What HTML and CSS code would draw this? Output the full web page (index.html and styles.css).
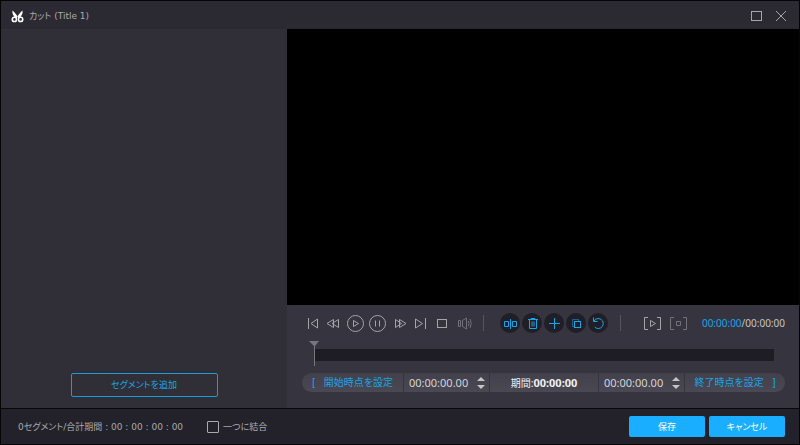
FILE: index.html
```html
<!DOCTYPE html>
<html lang="ja">
<head>
  <meta charset="UTF-8">
  <meta name="viewport" content="width=device-width, initial-scale=1.0">
  <title>カット (Title 1)</title>
  <link rel="stylesheet" href="styles.css">
</head>
<body>
  <header class="titlebar">
    <svg class="logo" width="13" height="13" viewBox="0 0 13 13">
      <path d="M1.5 0.5C0.9 3.5 2.4 6 5.2 8.6L7.2 7.6C5.6 4.6 3.8 2.4 1.5 0.5ZM11.5 0.5C12.1 3.5 10.6 6 7.8 8.6L5.8 7.6C7.4 4.6 9.2 2.4 11.5 0.5Z" fill="#fff"/>
      <circle cx="3.4" cy="9.4" r="2.1" fill="none" stroke="#fff" stroke-width="1.6"/>
      <circle cx="9.6" cy="9.4" r="2.1" fill="none" stroke="#fff" stroke-width="1.6"/>
    </svg>
    <h1>カット (Title 1)</h1>
    <div class="window-buttons">
      <button type="button" aria-label="最大化"><svg width="12" height="12"><rect x="1.5" y="1.5" width="10" height="9"/></svg></button>
      <button type="button" aria-label="閉じる"><svg width="12" height="12"><path d="M1 1L11 11M11 1L1 11"/></svg></button>
    </div>
  </header>

  <main>
    <section class="segments">
      <button type="button" class="add-segment">セグメントを追加</button>
    </section>

    <section class="player">
      <div class="video"></div>

      <!-- Playback and segment tools -->
      <div class="controls">
        <div class="playback">
          <button type="button" aria-label="先頭へ"><svg width="22" height="22"><path d="M8.5 6V17M17.5 7V16L11 11.5Z"/></svg></button>
          <button type="button" aria-label="巻き戻し"><svg width="22" height="22"><path d="M11.5 7.5V15.5L5 11.5ZM16.5 7.5V15.5L10 11.5Z"/></svg></button>
          <button type="button" aria-label="再生"><svg width="22" height="22"><circle cx="11.5" cy="11.5" r="8"/><path d="M9.5 8.5V14.5L14.5 11.5Z"/></svg></button>
          <button type="button" aria-label="一時停止"><svg width="22" height="22"><circle cx="11.5" cy="11.5" r="8"/><path d="M9.5 8.5V14.5M13.5 8.5V14.5"/></svg></button>
          <button type="button" aria-label="早送り"><svg width="22" height="22"><path d="M7.5 7.5V15.5L13.5 11.5ZM11.5 7.5V15.5L18 11.5Z"/></svg></button>
          <button type="button" aria-label="末尾へ"><svg width="22" height="22"><path d="M15.5 6V17M5.5 7V16L12.5 11.5Z"/></svg></button>
          <button type="button" aria-label="停止"><svg width="22" height="22"><rect x="5.5" y="7.5" width="9" height="8"/></svg></button>
          <button type="button" class="dim" aria-label="音量"><svg width="22" height="22"><path d="M4.5 8.5H6.5V14.5H4.5ZM8.5 8.5L12.5 6V17L8.5 14.5ZM14.5 9Q15.5 11.5 14.5 14M16 7Q18.5 11.5 16 16"/></svg></button>
        </div>
        <span class="divider"></span>
        <div class="tools">
          <button type="button" aria-label="分割"><svg width="20" height="20"><path d="M10.5 6V16M4.5 8.5H8.5V13.5H4.5ZM12.5 8.5H16.5V13.5H12.5Z"/></svg></button>
          <button type="button" aria-label="削除"><svg width="20" height="20"><path d="M6 6.5H16M9 6.5V5.5H13V6.5M7.5 6.5V15.5H14.5V6.5M10 8.5V13.5M12 8.5V13.5"/></svg></button>
          <button type="button" aria-label="追加"><svg width="20" height="20"><path d="M10.5 5V16M5 10.5H16"/></svg></button>
          <button type="button" aria-label="コピー"><svg width="20" height="20"><path class="back" d="M8 13.5H6.5V6.5H12.5V8"/><rect x="8.5" y="8.5" width="6" height="6"/></svg></button>
          <button type="button" aria-label="リセット"><svg width="20" height="20"><path d="M5.5 4.5V8.5H9.5M5.8 8.2A5 5 0 1 1 6.8 14.2"/></svg></button>
        </div>
        <span class="divider"></span>
        <div class="preview">
          <button type="button" aria-label="区間を再生"><svg width="22" height="22"><path d="M6 5.5H2.5V17.5H6M15 5.5H18.5V17.5H15M8.5 8.5V14.5L13.5 11.5Z"/></svg></button>
          <button type="button" class="dim" aria-label="区間を停止"><svg width="22" height="22"><path d="M6 5.5H2.5V17.5H6M15 5.5H18.5V17.5H15M8.5 9.5H12.5V13.5H8.5Z"/></svg></button>
        </div>
        <p class="time"><span>00:00:00</span>/00:00:00</p>
      </div>

      <input class="timeline" type="range" min="0" max="100" value="0" aria-label="再生位置">

      <div class="range-bar">
        <button type="button" class="set-point"><span>[</span>開始時点を設定</button>
        <div class="stepper">
          <input type="text" value="00:00:00.00" aria-label="開始時点">
          <div class="arrows">
            <button type="button" aria-label="開始時点を増やす"><svg width="8" height="5"><path d="M0 5L4 1L8 5Z"/></svg></button>
            <button type="button" aria-label="開始時点を減らす"><svg width="8" height="5"><path d="M0 0L4 4L8 0Z"/></svg></button>
          </div>
        </div>
        <p class="duration">期間:<b>00:00:00</b></p>
        <div class="stepper">
          <input type="text" value="00:00:00.00" aria-label="終了時点">
          <div class="arrows">
            <button type="button" aria-label="終了時点を増やす"><svg width="8" height="5"><path d="M0 5L4 1L8 5Z"/></svg></button>
            <button type="button" aria-label="終了時点を減らす"><svg width="8" height="5"><path d="M0 0L4 4L8 0Z"/></svg></button>
          </div>
        </div>
        <button type="button" class="set-point">終了時点を設定<span>]</span></button>
      </div>
    </section>
  </main>

  <footer>
    <p class="summary">0セグメント/合計期間 : 00 : 00 : 00 : 00</p>
    <label class="merge"><input type="checkbox">一つに結合</label>
    <div class="actions">
      <button type="button">保存</button>
      <button type="button">キャンセル</button>
    </div>
  </footer>
</body>
</html>
```
FILE: styles.css
```css
* {
  box-sizing: border-box;
}
body {
  display: flex;
  flex-direction: column;
  min-height: 100vh;
  margin: 0;
  border: 1px solid #050508;
  background-color: #302f38;
  color: #c4c4c8;
  font-family: "DejaVu Sans", "Noto Sans CJK JP", sans-serif;
  font-size: 9px;
  line-height: 16px;
  font-feature-settings: "palt";
}
h1,
p {
  margin: 0;
}
button,
input {
  margin: 0;
  padding: 0;
  border: none;
  background: none;
  color: inherit;
  font: inherit;
  font-feature-settings: inherit;
}
button {
  cursor: pointer;
}
svg {
  display: block;
  fill: none;
  stroke: #a4a4aa;
}

/* Title bar */
.titlebar {
  display: flex;
  align-items: center;
  height: 28px;
  padding: 2px 12px 0 10px;
  background-color: #2b2a33;
}
.logo {
  stroke: none;
}
h1 {
  margin-left: 5px;
  color: #a9a9ae;
  font-size: 9px;
  font-weight: normal;
}
.window-buttons {
  display: flex;
  gap: 13px;
  margin-left: auto;
}

main {
  display: flex;
  flex: 1;
}

/* Segment list */
.segments {
  display: flex;
  flex: 0 0 286px;
  align-items: flex-end;
  justify-content: center;
  padding-bottom: 11px;
}
.add-segment {
  width: 147px;
  height: 24px;
  border: 1px solid #1c9ad6;
  border-radius: 2px;
  color: #1ba4e4;
}

/* Player */
.player {
  display: flex;
  flex: 1;
  flex-direction: column;
  background-color: #35343f;
}
.video {
  flex: 1;
  background-color: #000;
}
.controls {
  display: flex;
  align-items: center;
  padding: 7px 14px 7px 13px;
}
.playback,
.tools,
.preview {
  display: flex;
}
.dim {
  opacity: 0.55;
}
.divider {
  width: 1px;
  height: 16px;
  margin: 0 16px 0 7px;
  background-color: #56555f;
}
.tools {
  gap: 2px;
}
.tools button {
  border-radius: 50%;
  background-color: #201f27;
}
.tools svg {
  stroke: #1ba4e4;
}
.tools .back {
  opacity: 0.5;
}
.tools + .divider {
  margin: 0 21px 0 12px;
}
.preview {
  gap: 4px;
}
.time {
  margin-left: auto;
  font-family: "Noto Sans", sans-serif;
  font-size: 10px;
}
.time span {
  color: #1ba4e4;
}

.timeline {
  height: 25px;
  margin: 0 20px 7px 22px;
  appearance: none;
  background: linear-gradient(#1e1d25, #1e1d25) center 8px / calc(100% - 10px) 12px no-repeat;
}
.timeline::-webkit-slider-thumb {
  width: 10px;
  height: 25px;
  appearance: none;
  background-color: #77767e;
  clip-path: polygon(0 0, 100% 0, 6px 5px, 6px 100%, 5px 100%, 5px 5px);
}

/* Start / end time bar */
.range-bar {
  display: grid;
  grid-template-columns: 101fr 86fr 109fr 86fr 101fr;
  height: 19px;
  margin: 0 14px 16px 15px;
  border-radius: 10px;
  overflow: hidden;
  background: linear-gradient(#41404b, #4a4953);
}
.range-bar > * + * {
  border-left: 1px solid #35343f;
}
.set-point {
  display: flex;
  align-items: center;
  justify-content: center;
  gap: 8px;
  color: #1ba4e4;
  font-size: 10px;
}
.stepper {
  display: flex;
  align-items: center;
  justify-content: space-between;
  padding: 0 4px 0 5px;
}
.stepper input {
  flex: 1;
  width: 0;
  min-width: 0;
  color: #d4d4d8;
  font-family: "Noto Sans", sans-serif;
  font-size: 11px;
}
.arrows {
  display: flex;
  flex-direction: column;
  gap: 4px;
}
.arrows svg {
  fill: #c4c4c8;
  stroke: none;
}
.duration {
  color: #f0f0f2;
  font-family: "Noto Sans", "Noto Sans CJK JP", sans-serif;
  font-size: 10px;
  line-height: 19px;
  text-align: center;
}
.duration b {
  font-size: 11px;
}

/* Footer */
footer {
  display: flex;
  align-items: center;
  height: 36px;
  padding: 0 14px 0 17px;
  border-top: 1px solid #08080b;
  background-color: #23222a;
}
.summary {
  color: #a9a9ae;
}
.merge {
  display: flex;
  align-items: center;
  gap: 4px;
  margin-left: 24px;
  color: #a9a9ae;
}
.merge input {
  width: 12px;
  height: 12px;
  appearance: none;
  border: 1px solid #a9a9ae;
  border-radius: 1px;
}
.merge input:checked {
  background-color: #19aeff;
}
.actions {
  display: flex;
  gap: 4px;
  margin-left: auto;
}
.actions button {
  width: 76px;
  height: 21px;
  border-radius: 2px;
  background-color: #19aeff;
  color: #fff;
}
```
